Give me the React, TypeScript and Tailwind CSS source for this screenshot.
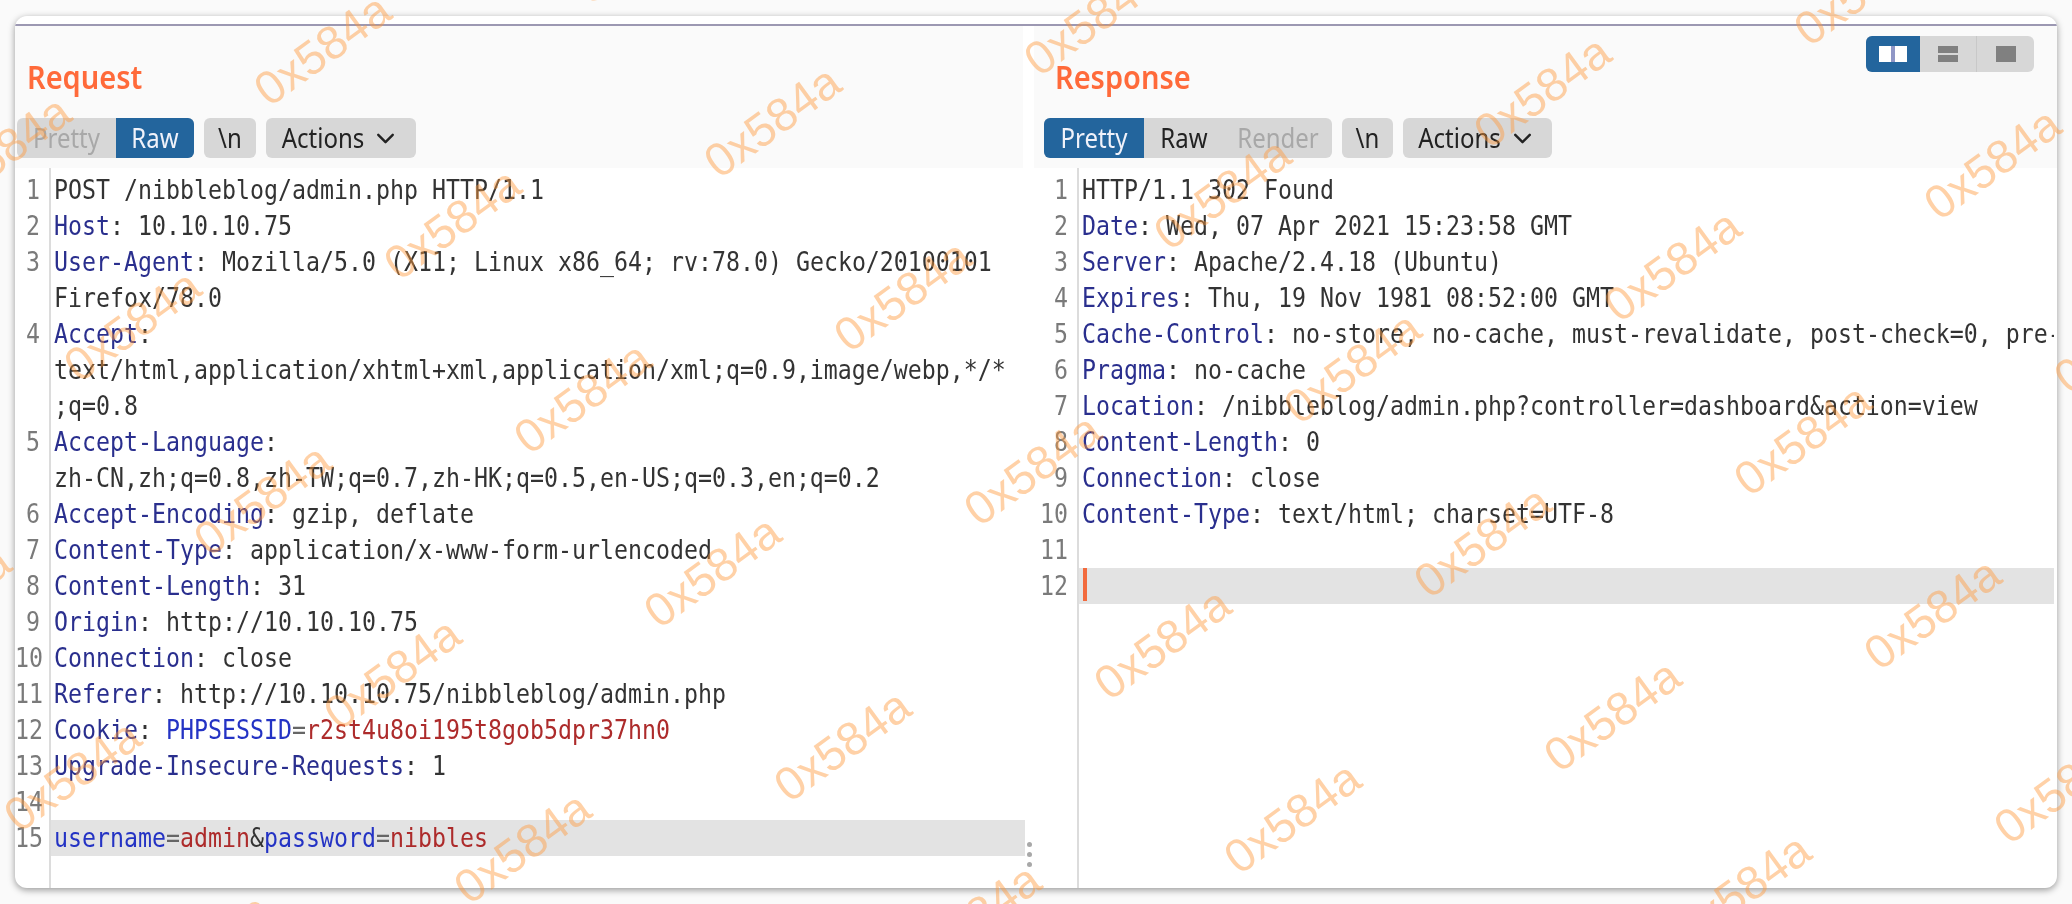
import { ChevronDown } from "lucide-react";

type Part = [string, string?];
interface Row { n?: number; parts: Part[]; band?: boolean; caret?: boolean }

const NAME = "text-[#2a2f8e]";
const PARAM = "text-[#2433c4]";
const VAL = "text-[#ad2b2b]";
const EQ = "text-[#666666]";

const head = (n: number, name: string, rest = ""): Row => ({ n, parts: [[name, NAME], [rest]] });

const REQUEST: Row[] = [
  { n: 1, parts: [["POST /nibbleblog/admin.php HTTP/1.1"]] },
  head(2, "Host", ": 10.10.10.75"),
  head(3, "User-Agent", ": Mozilla/5.0 (X11; Linux x86_64; rv:78.0) Gecko/20100101"),
  { parts: [["Firefox/78.0"]] },
  head(4, "Accept", ":"),
  { parts: [["text/html,application/xhtml+xml,application/xml;q=0.9,image/webp,*/*"]] },
  { parts: [[";q=0.8"]] },
  head(5, "Accept-Language", ":"),
  { parts: [["zh-CN,zh;q=0.8,zh-TW;q=0.7,zh-HK;q=0.5,en-US;q=0.3,en;q=0.2"]] },
  head(6, "Accept-Encoding", ": gzip, deflate"),
  head(7, "Content-Type", ": application/x-www-form-urlencoded"),
  head(8, "Content-Length", ": 31"),
  head(9, "Origin", ": http://10.10.10.75"),
  head(10, "Connection", ": close"),
  head(11, "Referer", ": http://10.10.10.75/nibbleblog/admin.php"),
  { n: 12, parts: [["Cookie", NAME], [": "], ["PHPSESSID", PARAM], ["=", EQ], ["r2st4u8oi195t8gob5dpr37hn0", VAL]] },
  head(13, "Upgrade-Insecure-Requests", ": 1"),
  { n: 14, parts: [] },
  { n: 15, band: true, parts: [["username", PARAM], ["=", EQ], ["admin", VAL], ["&"], ["password", PARAM], ["=", EQ], ["nibbles", VAL]] },
];

const RESPONSE: Row[] = [
  { n: 1, parts: [["HTTP/1.1 302 Found"]] },
  head(2, "Date", ": Wed, 07 Apr 2021 15:23:58 GMT"),
  head(3, "Server", ": Apache/2.4.18 (Ubuntu)"),
  head(4, "Expires", ": Thu, 19 Nov 1981 08:52:00 GMT"),
  head(5, "Cache-Control", ": no-store, no-cache, must-revalidate, post-check=0, pre-check=0"),
  head(6, "Pragma", ": no-cache"),
  head(7, "Location", ": /nibbleblog/admin.php?controller=dashboard&action=view"),
  head(8, "Content-Length", ": 0"),
  head(9, "Connection", ": close"),
  head(10, "Content-Type", ": text/html; charset=UTF-8"),
  { n: 11, parts: [] },
  { n: 12, parts: [], band: true, caret: true },
];

// watermark repeats on a skewed lattice
const MARKS: { x: number; y: number }[] = [];
for (let i = -4; i < 8; i++) {
  for (let j = -4; j < 8; j++) {
    const x = 322 + i * 450 + j * 130;
    const y = 49 + i * 72 + j * 174;
    if (x > -90 && x < 2160 && y > -60 && y < 960) MARKS.push({ x, y });
  }
}

function Label({ children }: { children: React.ReactNode }) {
  return <span className="inline-block scale-y-[1.12]">{children}</span>;
}

function Segment({ label, className }: { label: string; className: string }) {
  return (
    <div className={`flex h-full items-center justify-center ${className}`}>
      <Label>{label}</Label>
    </div>
  );
}

function Extras({ nlWidth, actionsWidth }: { nlWidth: string; actionsWidth: string }) {
  return (
    <>
      <div className={`ml-[10px] flex h-full items-center justify-center rounded-[6px] bg-[#d7d7d7] ${nlWidth}`}>
        <Label>\n</Label>
      </div>
      <div className={`ml-[10px] flex h-full items-center justify-center gap-[7px] rounded-[6px] bg-[#d7d7d7] ${actionsWidth}`}>
        <Label>Actions</Label>
        <ChevronDown size={29} strokeWidth={2} className="text-[#222]" />
      </div>
    </>
  );
}

function CodeRows({ rows, gutter, clip }: { rows: Row[]; gutter: string; clip: string }) {
  return (
    <div className="flex flex-1 font-['DejaVu_Sans_Mono',monospace] text-[23.25px] leading-[36px] text-[#333333]">
      <div className={`shrink-0 border-r-2 border-[#dcdcdc] pt-[4px] pr-[9px] text-right text-[#7a7a7a] ${gutter}`}>
        {rows.map((r, i) => (
          <div key={i} className="h-[36px]">
            {r.n !== undefined && <span className="inline-block scale-y-[1.17]">{r.n}</span>}
          </div>
        ))}
      </div>
      <div className={`min-w-0 flex-1 pt-[4px] ${clip}`}>
        {rows.map((r, i) => (
          <div key={i} className={`relative h-[36px] overflow-hidden whitespace-pre pl-[3px] ${r.band ? "bg-[#e3e3e3]" : ""}`}>
            {r.caret && <div className="absolute top-0 left-[4px] h-[33px] w-[4px] bg-[#f26a3d]" />}
            <span className="inline-block scale-y-[1.17]">
              {r.parts.map(([t, c], k) => (
                <span key={k} className={c}>{t}</span>
              ))}
            </span>
          </div>
        ))}
      </div>
    </div>
  );
}

export default function App() {
  return (
    <div className="relative h-[904px] w-[2072px] overflow-hidden bg-[#fafafa] pt-[16px] pl-[15px] font-['Noto_Sans',sans-serif] text-[24px] text-[#222222]">
      <div className="flex h-[872px] w-[2042px] flex-col overflow-hidden rounded-[12px] bg-white shadow-[0_2px_7px_rgba(0,0,0,0.4)] blur-[0.4px]">
        <div className="h-[8px] shrink-0" />
        <div className="h-[2px] shrink-0 bg-[#9c98b2]" />
        <div className="flex min-h-0 flex-1">
          {/* request pane */}
          <div className="flex w-[1010px] shrink-0 flex-col">
            <div className="mr-[2px] h-[142px] shrink-0 bg-[#fafafa] pl-[2px]">
              <div className="h-[70px] pt-[31px] pl-[10px] text-[29px] leading-[40px] font-semibold text-[#ff6a3a]">
                <Label>Request</Label>
              </div>
              <div className="mt-[22px] flex h-[40px]">
                <div className="flex h-full overflow-hidden rounded-[6px] bg-[#d7d7d7]">
                  <Segment label="Pretty" className="w-[99px] text-[#a8a8a8]" />
                  <Segment label="Raw" className="w-[78px] bg-[#23659d] text-[#f0f2fa]" />
                </div>
                <Extras nlWidth="w-[52px]" actionsWidth="w-[150px]" />
              </div>
            </div>
            <CodeRows rows={REQUEST} gutter="w-[36px]" clip="" />
          </div>

          {/* response pane */}
          <div className="ml-[9px] flex min-w-0 flex-1 flex-col">
            <div className="h-[142px] shrink-0 bg-[#fafafa] pl-[10px]">
              <div className="flex h-[70px] items-start justify-between">
                <div className="pt-[31px] pl-[11px] text-[29px] leading-[40px] font-semibold text-[#ff6a3a]">
                  <Label>Response</Label>
                </div>
                <div className="mt-[10px] mr-[23px] flex h-[36px] w-[168px] overflow-hidden rounded-[6px] bg-[#d7d7d7]">
                  <div className="flex w-[54px] items-center justify-center bg-[#23659d]">
                    <div className="flex h-[16px] w-[28px] bg-white">
                      <div className="mx-auto w-[4px] bg-[#8f96c6]" />
                    </div>
                  </div>
                  <div className="flex w-[57px] flex-col items-center justify-center gap-[2px] border-r border-[#c8c8c8]">
                    <div className="h-[7px] w-[20px] bg-[#808080]" />
                    <div className="h-[7px] w-[20px] bg-[#808080]" />
                  </div>
                  <div className="flex flex-1 items-center justify-center">
                    <div className="h-[16px] w-[20px] bg-[#808080]" />
                  </div>
                </div>
              </div>
              <div className="mt-[22px] flex h-[40px]">
                <div className="flex h-full overflow-hidden rounded-[6px] bg-[#d7d7d7]">
                  <Segment label="Pretty" className="w-[100px] bg-[#23659d] text-[#f0f2fa]" />
                  <Segment label="Raw" className="w-[80px]" />
                  <Segment label="Render" className="w-[108px] text-[#a8a8a8]" />
                </div>
                <Extras nlWidth="w-[51px]" actionsWidth="w-[149px]" />
              </div>
            </div>
            <CodeRows rows={RESPONSE} gutter="w-[45px]" clip="pr-[3px]" />
          </div>
        </div>
      </div>

      {/* splitter grip */}
      <div className="absolute top-[842px] left-[1027px] flex flex-col gap-[5px]">
        <div className="h-[5px] w-[5px] rounded-full bg-[#a8a8a8]" />
        <div className="h-[5px] w-[5px] rounded-full bg-[#a8a8a8]" />
        <div className="h-[5px] w-[5px] rounded-full bg-[#a8a8a8]" />
      </div>

      {/* watermark */}
      <div className="pointer-events-none absolute inset-0 overflow-hidden blur-[0.4px]">
        {MARKS.map((m) => (
          <div
            key={`${m.x}-${m.y}`}
            className="absolute -translate-x-1/2 -translate-y-1/2 -rotate-[36deg] font-['Liberation_Sans',sans-serif] text-[47px] leading-none whitespace-nowrap text-[#ff9a3c]/45"
            style={{ left: m.x, top: m.y }}
          >
            0x584a
          </div>
        ))}
      </div>
    </div>
  );
}
